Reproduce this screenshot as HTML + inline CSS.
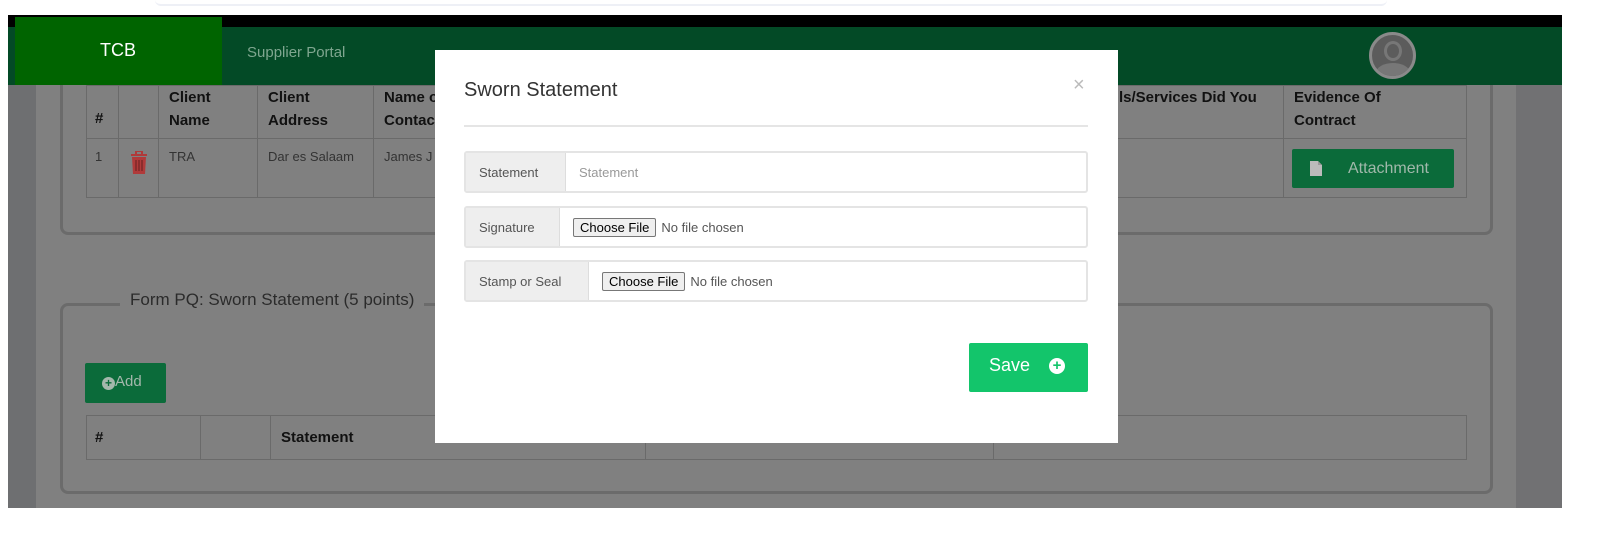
<!DOCTYPE html>
<html><head><meta charset="utf-8"><style>
*{box-sizing:border-box;margin:0;padding:0}
body{width:1616px;height:533px;background:#fff;font-family:"Liberation Sans",sans-serif;position:relative;overflow:hidden}
.a{position:absolute}
table{border-collapse:collapse;position:absolute}
td,th{border:1px solid #6a6a6a;text-align:left;vertical-align:top;color:#111;font-size:15px}
th{font-weight:bold;line-height:23px}
.cell{color:#333;font-size:13px}
.ig{position:absolute;left:464px;width:624px;height:42px;border:2px solid #e4e4e4;border-radius:3px;display:flex;background:#fff}
.ig .ad{background:#eee;color:#555;font-size:13px;display:flex;align-items:center;padding-left:13px}
.ig .in{flex:1;display:flex;align-items:center;padding-left:13px;font-size:13px;color:#555;border-left:1px solid #ddd}
.btn{border:1px solid #777;border-radius:2px;background:#efefef;font-size:13px;color:#000;padding:1px 6px;margin-right:5px}
</style></head><body>
<div class="a" style="left:155px;top:0;width:1232px;height:6px;border-bottom:2px solid #eef0f6;border-radius:0 0 8px 8px"></div>
<div class="a" style="left:8px;top:15px;width:1554px;height:12px;background:#000"></div>
<div class="a" style="left:8px;top:85px;width:1554px;height:423px;background:#808080"></div>
<div class="a" style="left:8px;top:85px;width:28px;height:423px;background:#6e6f71"></div>
<div class="a" style="left:1516px;top:85px;width:46px;height:423px;background:#717173"></div>
<div class="a" style="left:60px;top:85px;width:1433px;height:150px;border:3px solid #6b6b6b;border-top:none;border-radius:0 0 8px 8px"></div>
<div class="a" style="left:8px;top:27px;width:1554px;height:58px;background:#034a26"></div>
<div class="a" style="left:15px;top:17px;width:207px;height:68px;background:#006400;color:#fff;font-size:18px;padding:23px 0 0 85px">TCB</div>
<div class="a" style="left:247px;top:44px;color:#7fa68f;font-size:15px">Supplier Portal</div>
<div class="a" style="left:1369px;top:32px;width:47px;height:47px;border-radius:50%;background:#5c5c5c;border:3px solid #8a8a8a;overflow:hidden">
<div class="a" style="left:12px;top:6px;width:18px;height:20px;border-radius:50%;border:3px solid #777"></div>
<div class="a" style="left:4px;top:28px;width:34px;height:20px;border-radius:50% 50% 0 0;background:#777"></div></div>
<table style="left:86px;top:85px;width:1381px">
<tr style="height:53px"><th style="width:32px;vertical-align:bottom;padding:0 0 8px 8px">#</th><th style="width:40px"></th><th style="width:99px;padding:0 10px">Client Name</th><th style="width:116px;padding:0 10px">Client Address</th><th style="width:910px;padding:0 10px;position:relative"><span>Name of<br>Contact</span><span class="a" style="left:745px;top:0">ls/Services Did You</span></th><th style="padding:0 10px">Evidence Of<br>Contract</th></tr>
<tr style="height:59px"><td class="cell" style="padding:10px 8px">1</td><td style="padding:12px 0 0 10px"><svg width="20" height="24" viewBox="0 0 20 24"><rect x="2" y="3" width="16" height="2" fill="#b03a3a"/><rect x="7" y="0" width="6" height="4" fill="none" stroke="#b03a3a" stroke-width="2"/><path d="M3 6h14l-1 17H4z" fill="#b03a3a"/><path d="M7 9v11M10 9v11M13 9v11" stroke="#7a2626" stroke-width="1.4"/></svg></td><td class="cell" style="padding:10px">TRA</td><td class="cell" style="padding:10px">Dar es Salaam</td><td class="cell" style="padding:10px">James J</td><td style="padding:10px 12px 0 8px"><div style="background:#0b6b3a;border-radius:2px;height:39px;color:#a0b8aa;font-size:16px;display:flex;align-items:center;padding-left:18px"><svg width="12" height="15"><path d="M0 0h8l4 4v11H0z" fill="#bbb"/><path d="M8 0v4h4" fill="#999"/></svg><span style="margin-left:26px">Attachment</span></div></td></tr>
</table>
<div class="a" style="left:60px;top:303px;width:1433px;height:191px;border:3px solid #6b6b6b;border-radius:8px"></div>
<div class="a" style="left:120px;top:290px;background:#808080;padding:0 10px;color:#2b2b2b;font-size:17px">Form PQ: Sworn Statement (5 points)</div>
<div class="a" style="left:85px;top:363px;width:81px;height:40px;background:#0b6b3a;border-radius:2px;color:#a4b8ac;font-size:15px;padding:10px 0 0 17px"><span style="display:inline-block;width:13px;height:13px;border-radius:50%;background:#a4b8ac;color:#0b6b3a;font-size:12px;line-height:13px;text-align:center;font-weight:bold;vertical-align:-1px">+</span>Add</div>
<table style="left:86px;top:415px;width:1381px">
<tr style="height:42px"><th style="width:114px;padding:10px 8px">#</th><th style="width:70px"></th><th style="width:375px;padding:10px 10px">Statement</th><th style="width:348px"></th><th></th></tr></table>
<div class="a" style="left:435px;top:50px;width:683px;height:393px;background:#fff">
<div class="a" style="left:29px;top:29px;font-size:20px;color:#333">Sworn Statement</div>
<div class="a" style="left:638px;top:24px;font-size:20px;color:#bbb">×</div>
<div class="a" style="left:29px;top:75px;width:624px;height:2px;background:#e5e5e5"></div>
<div class="a" style="left:534px;top:293px;width:119px;height:49px;background:#13c56b;border-radius:2px;color:#fff;font-size:18px;padding:12px 0 0 20px">Save<span style="display:inline-block;margin-left:19px;width:16px;height:16px;border-radius:50%;background:#fff;color:#13c56b;font-size:15px;line-height:16px;text-align:center;font-weight:bold;vertical-align:1px">+</span></div>
</div>
<div class="ig" style="top:151px"><div class="ad" style="width:99px">Statement</div><div class="in" style="color:#999">Statement</div></div>
<div class="ig" style="top:206px"><div class="ad" style="width:93px">Signature</div><div class="in" style="padding-left:13px"><span class="btn">Choose File</span>No file chosen</div></div>
<div class="ig" style="top:260px"><div class="ad" style="width:122px">Stamp or Seal</div><div class="in" style="padding-left:13px"><span class="btn">Choose File</span>No file chosen</div></div>
</body></html>
